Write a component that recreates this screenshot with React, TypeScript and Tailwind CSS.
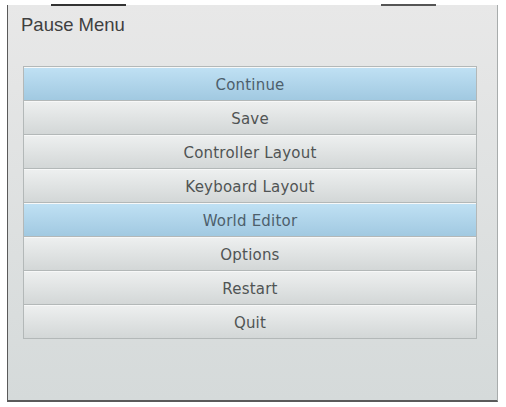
import React from 'react'

const items = [
  { label: 'Continue', active: true },
  { label: 'Save', active: false },
  { label: 'Controller Layout', active: false },
  { label: 'Keyboard Layout', active: false },
  { label: 'World Editor', active: true },
  { label: 'Options', active: false },
  { label: 'Restart', active: false },
  { label: 'Quit', active: false },
]

const MenuButton = ({ label, active }: { label: string; active: boolean }) => (
  <button
    className={`h-[34px] w-full border-x border-b border-[#b3b8b8] pt-[3px] text-[15px] tracking-[0.2px] shadow-[inset_0_1px_0_#f7f8f8] ${
      active
        ? 'bg-gradient-to-b from-[#c0e1f4] to-[#a1c9e1] text-[#4d5f6c] shadow-[inset_0_1px_0_#d4ecf9]'
        : 'bg-gradient-to-b from-[#eef0f0] to-[#d3d7d7] text-[#505454]'
    }`}
    style={{ fontFamily: '"DejaVu Sans", sans-serif' }}
  >
    {label}
  </button>
)

export default function App() {
  return (
    <div className="h-[407px] w-[506px] bg-white pl-[7px] pt-[5px]">
      <div className="relative h-[397px] w-[491px] border-b-2 border-l border-r border-[#5a5a5a] border-r-[#a8acac] bg-gradient-to-b from-[#e8e8e8] to-[#d5dada]">
        <div className="absolute -top-[1px] left-[43px] h-[2px] w-[75px] bg-[#333]" />
        <div className="absolute -top-[1px] left-[373px] h-[2px] w-[55px] bg-[#555]" />
        <div
          className="pl-[13px] pt-[9px] text-[18.5px] leading-[22px] text-[#3f3f3f]"
          style={{ fontFamily: '"Liberation Sans", Arial, sans-serif' }}
        >
          Pause Menu
        </div>
        <div className="ml-[15px] mt-[30px] flex w-[454px] flex-col border-t border-[#b3b8b8]">
          {items.map((item) => (
            <MenuButton key={item.label} label={item.label} active={item.active} />
          ))}
        </div>
      </div>
    </div>
  )
}
